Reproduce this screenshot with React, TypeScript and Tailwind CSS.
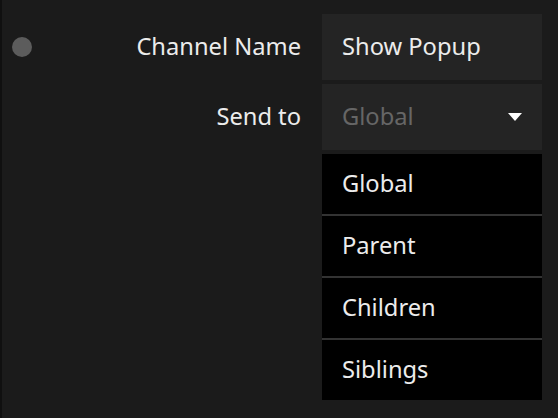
import { useState } from 'react';

const options = ['Global', 'Parent', 'Children', 'Siblings'];

function Caret() {
  return (
    <svg width="14" height="8" viewBox="0 0 14 8" className="shrink-0">
      <path d="M0 0 L14 0 L7 8 Z" fill="#ffffff" />
    </svg>
  );
}

export default function App() {
  const [channel] = useState('Show Popup');

  return (
    <div
      className="h-[418px] w-full overflow-hidden border-l-2 border-[#101010] bg-[#1b1b1b] pt-[14px] text-[23.7px] text-[#ececec]"
      style={{ fontFamily: '"Noto Sans", "Open Sans", sans-serif' }}
    >
      {/* Channel name row */}
      <div className="flex h-[66px] items-center">
        <div className="flex w-[320px] items-center justify-between pl-[10px] pr-[21px]">
          <span className="h-5 w-5 rounded-full bg-[#5c5c5c]" />
          <span>Channel Name</span>
        </div>
        <div className="flex h-full w-[220px] items-center bg-[#242424] px-5">{channel}</div>
      </div>

      {/* Send to row */}
      <div className="mt-1 flex h-[66px] items-center">
        <div className="w-[320px] pr-[21px] text-right">Send to</div>
        <div className="relative h-full w-[220px]">
          <div className="flex h-full items-center justify-between bg-[#242424] pl-5 pr-5">
            <span className="text-[#666666]">Global</span>
            <Caret />
          </div>

          {/* open menu */}
          <div className="absolute left-0 top-[70px] flex w-full flex-col gap-[2px] bg-[#333333]">
            {options.map((opt) => (
              <div key={opt} className="flex h-[60px] items-center bg-black px-5">
                {opt}
              </div>
            ))}
          </div>
        </div>
      </div>
    </div>
  );
}
